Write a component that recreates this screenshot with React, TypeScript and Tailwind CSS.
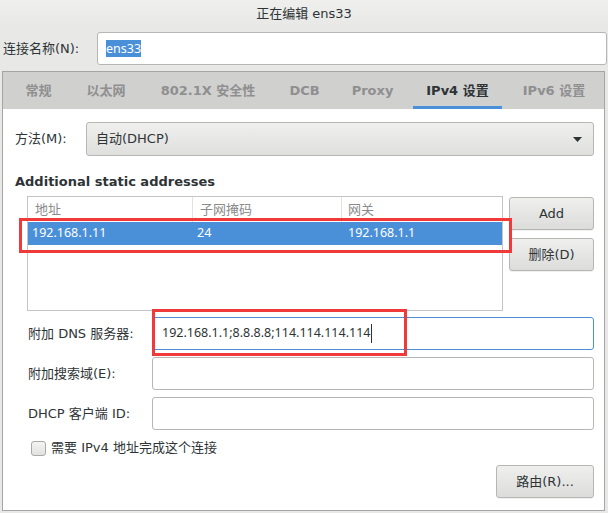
const tabs = [
  { label: '常规', w: 'w-[53px]' },
  { label: '以太网', w: 'w-[66px]' },
  { label: '802.1X 安全性', w: 'w-[122px]' },
  { label: 'DCB', w: 'w-[55px]' },
  { label: 'Proxy', w: 'w-[65px]' },
  { label: 'IPv4 设置', w: 'w-[89px]', active: true },
  { label: 'IPv6 设置', w: 'w-[88px]' },
]

const entryFont = "font-['Noto_Sans','Noto_Sans_CJK_SC',sans-serif] text-[12.5px]"

function Button({ label, className = '' }: { label: string; className?: string }) {
  return (
    <div
      className={`h-[33px] flex items-center justify-center rounded-[3px] border border-[#b6b6b3] bg-linear-to-b from-[#efefee] to-[#dcdcdb] shadow-[0_1px_0_rgba(0,0,0,0.06)] text-[#2e3436] ${className}`}
    >
      {label}
    </div>
  )
}

function FormRow({ label, value, focused }: { label: string; value?: string; focused?: boolean }) {
  return (
    <div className="flex items-center ml-[13px]">
      <div className="w-[124px] shrink-0">{label}</div>
      <div
        className={`flex-1 h-[33px] rounded-[3px] bg-white flex items-center pl-[9px] ${
          focused ? 'border border-[#4a90d9]' : 'border border-[#b6b6b3]'
        } ${entryFont}`}
      >
        {value}
        {focused && <span className="inline-block w-px h-[19px] bg-[#2e3436] ml-[1px]" />}
      </div>
    </div>
  )
}

export default function App() {
  return (
    <div className="relative w-[608px] h-[513px] overflow-hidden bg-[#e8e8e7] text-[13px] text-[#2e3436] font-['DejaVu_Sans','Noto_Sans_CJK_SC',sans-serif] flex flex-col">
      {/* Title */}
      <div className="h-[27px] mb-[1px] shrink-0 flex items-center justify-center bg-linear-to-b from-[#efefee] to-[#e8e8e7]">
        正在编辑 ens33
      </div>

      {/* Connection name */}
      <div className="mt-[4px] h-[33px] shrink-0 flex items-center">
        <div className="w-[97px] pl-[3px] shrink-0">连接名称(N):</div>
        <div className={`w-[510px] h-[33px] rounded-[3px] border border-[#b6b6b3] bg-white flex items-center pl-[8px] ${entryFont}`}>
          <span className="bg-[#4a90d9] text-white leading-[17px]">ens33</span>
        </div>
      </div>

      {/* Notebook */}
      <div className="mt-[6px] ml-[2px] w-[603px] border border-[#a5a5a5] flex flex-col">
        <div className="h-[37px] bg-[#d0d0cf] flex pl-[9px] gap-2">
          {tabs.map((t) => (
            <div
              key={t.label}
              className={`${t.w} flex items-center justify-center font-bold border-b-[3px] pt-[3px] ${
                t.active ? 'border-[#4a90d9] text-[#2e3436]' : 'border-transparent text-[#8f8f8f]'
              }`}
            >
              {t.label}
            </div>
          ))}
        </div>

        <div className="h-[401px] bg-white flex flex-col pt-[13px] pl-3 pr-[10px] pb-[12px]">
          {/* Method */}
          <div className="flex items-center h-[34px]">
            <div className="w-[71px] shrink-0">方法(M):</div>
            <div className="flex-1 h-[34px] rounded-[3px] border border-[#b6b6b3] bg-linear-to-b from-[#efefee] to-[#dfdfde] flex items-center justify-between pl-[9px] pr-[11px]">
              <span>自动(DHCP)</span>
              <svg width="9" height="5" viewBox="0 0 9 5">
                <path d="M0 0h9L4.5 5z" fill="#2e3436" />
              </svg>
            </div>
          </div>

          <div className="mt-[18px] leading-[16px] font-bold">Additional static addresses</div>

          {/* Addresses */}
          <div className="mt-[6px] ml-[12px] flex gap-[6px]">
            <div className="w-[476px] h-[115px] border border-[#c4c4c4] bg-white">
              <div className="h-[25px] grid grid-cols-[165px_149px_1fr] text-[#8b8b8b]">
                <div className="pl-[7px] flex items-center border-r border-[#e2e2e2]">地址</div>
                <div className="pl-[7px] flex items-center border-r border-[#e2e2e2]">子网掩码</div>
                <div className="pl-[6px] flex items-center">网关</div>
              </div>
              <div className={`h-[23px] grid grid-cols-[165px_149px_1fr] bg-[#4a90d9] text-white ${entryFont}`}>
                <div className="pl-[4px] flex items-center">192.168.1.11</div>
                <div className="pl-[4px] flex items-center">24</div>
                <div className="pl-[6px] flex items-center">192.168.1.1</div>
              </div>
            </div>
            <div className="w-[85px] flex flex-col gap-[8px] pt-[1px]">
              <Button label="Add" />
              <Button label="删除(D)" />
            </div>
          </div>

          <div className="mt-[6px]">
            <FormRow label="附加 DNS 服务器:" value="192.168.1.1;8.8.8.8;114.114.114.114" focused />
          </div>
          <div className="mt-[7px]">
            <FormRow label="附加搜索域(E):" />
          </div>
          <div className="mt-[7px]">
            <FormRow label="DHCP 客户端 ID:" />
          </div>

          <div className="mt-[10px] ml-[16px] h-[16px] flex items-center gap-[5px]">
            <div className="w-[15px] h-[15px] rounded-[3px] border border-[#a9a9a6] bg-linear-to-b from-[#f4f4f3] to-[#e2e2e1]" />
            <span>需要 IPv4 地址完成这个连接</span>
          </div>

          <div className="mt-[9px] self-end w-[98px]">
            <Button label="路由(R)..." />
          </div>
        </div>
      </div>

      {/* annotation boxes */}
      <div className="absolute left-[19px] top-[218px] w-[493px] h-[35px] border-[3px] border-[#f03a3a]" />
      <div className="absolute left-[152px] top-[309px] w-[255px] h-[47px] border-[3px] border-[#f03a3a]" />
    </div>
  )
}
